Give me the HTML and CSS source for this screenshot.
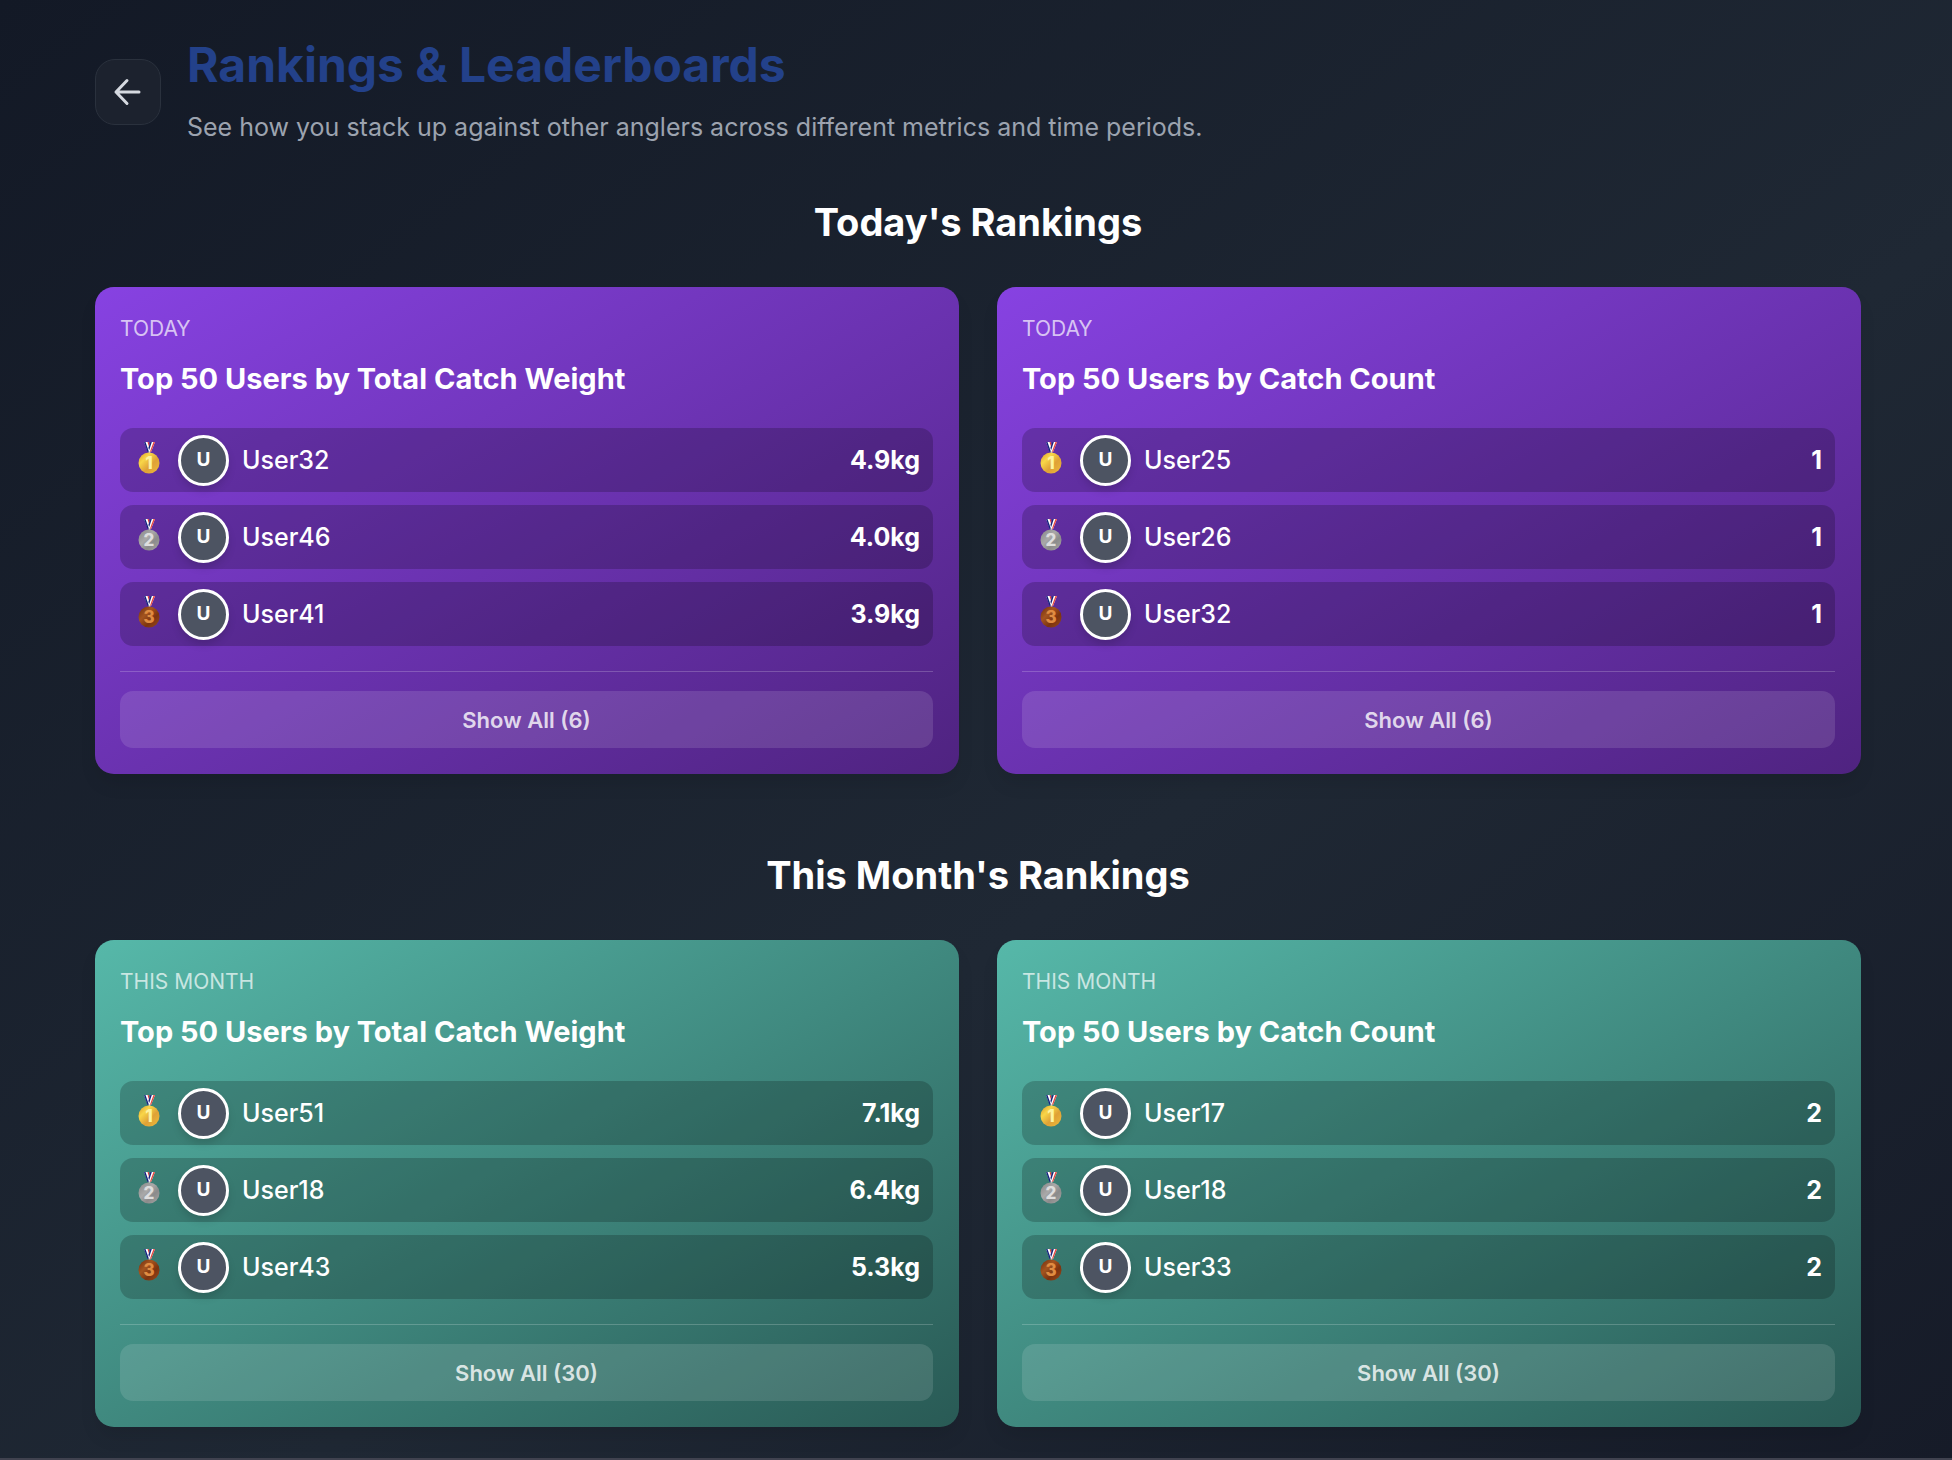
FILE: index.html
```html
<!DOCTYPE html>
<html lang="en">
<head>
<meta charset="utf-8">
<meta name="viewport" content="width=device-width, initial-scale=1">
<title>Rankings &amp; Leaderboards</title>
<link rel="stylesheet" href="styles.css">
</head>
<body>
<svg class="defs" aria-hidden="true">
  <defs>
    <linearGradient id="gold" x1="0" y1="0" x2="1" y2="1"><stop offset="0" stop-color="#d9962a"/><stop offset=".3" stop-color="#f8d648"/><stop offset=".6" stop-color="#dfa136"/><stop offset="1" stop-color="#eebb3a"/></linearGradient>
    <linearGradient id="silver" x1="0" y1="0" x2="1" y2="1"><stop offset="0" stop-color="#858585"/><stop offset=".4" stop-color="#a9a9a9"/><stop offset=".65" stop-color="#8b8b8b"/><stop offset="1" stop-color="#a6a6a6"/></linearGradient>
    <linearGradient id="bronze" x1="0" y1="0" x2="1" y2="1"><stop offset="0" stop-color="#6f2c0c"/><stop offset=".35" stop-color="#a4541f"/><stop offset=".65" stop-color="#7c330f"/><stop offset="1" stop-color="#9a4a1b"/></linearGradient>
    <g id="ribbon">
      <path d="M11 0h4.500l2 6-.5 4h-2z" fill="#fff"/>
      <path d="M11 0h1.500l3.500 10h-1.500z" fill="#15237f"/>
      <path d="M14.500 0h1.200l1.600 5-.6 2z" fill="#e23b3b"/>
      <path d="M17.500 0h4.500l-4 10h-2z" fill="#fff"/>
      <path d="M17.300 0h1.500l-2.600 8-.8-2z" fill="#15237f"/>
      <path d="M20.500 0h1.500l-4 10h-1.200z" fill="#e8453f"/>
      <circle cx="16.500" cy="10" r="1" fill="#d8d8d8"/>
    </g>
    <g id="medal-1"><use href="#ribbon"/><circle cx="16" cy="21" r="10.5" fill="url(#gold)"/></g>
    <g id="medal-2"><use href="#ribbon"/><circle cx="16" cy="21" r="10.5" fill="url(#silver)"/></g>
    <g id="medal-3"><use href="#ribbon"/><circle cx="16" cy="21" r="10.5" fill="url(#bronze)"/></g>
  </defs>
</svg>
<main class="page">
  <header class="page-header">
    <button class="back" type="button" aria-label="Back">
      <svg viewBox="0 0 32 32" width="32" height="32" fill="none" stroke="currentColor" stroke-width="3" stroke-linecap="round" stroke-linejoin="round"><path d="M27 16H4M15 27.500L4 16L15 4.500"/></svg>
    </button>
    <div class="intro">
      <h1>Rankings &amp; Leaderboards</h1>
      <p>See how you stack up against other anglers across different metrics and time periods.</p>
    </div>
  </header>
  <section class="period today">
    <h2>Today's Rankings</h2>
    <div class="cards">
      <article class="card">
        <p class="label">TODAY</p>
        <h3>Top 50 Users by Total Catch Weight</h3>
        <ol class="rows">
          <li><svg class="medal" viewBox="0 2 32 32"><use href="#medal-1"/><text class="num gold" x="16" y="27">1</text></svg><span class="avatar">U</span><span class="name">User32</span><span class="value">4.9kg</span></li>
          <li><svg class="medal" viewBox="0 2 32 32"><use href="#medal-2"/><text class="num silver" x="16" y="27">2</text></svg><span class="avatar">U</span><span class="name">User46</span><span class="value">4.0kg</span></li>
          <li><svg class="medal" viewBox="0 2 32 32"><use href="#medal-3"/><text class="num bronze" x="16" y="27">3</text></svg><span class="avatar">U</span><span class="name">User41</span><span class="value">3.9kg</span></li>
        </ol>
        <div class="more"><button type="button">Show All (6)</button></div>
      </article>
      <article class="card">
        <p class="label">TODAY</p>
        <h3>Top 50 Users by Catch Count</h3>
        <ol class="rows">
          <li><svg class="medal" viewBox="0 2 32 32"><use href="#medal-1"/><text class="num gold" x="16" y="27">1</text></svg><span class="avatar">U</span><span class="name">User25</span><span class="value">1</span></li>
          <li><svg class="medal" viewBox="0 2 32 32"><use href="#medal-2"/><text class="num silver" x="16" y="27">2</text></svg><span class="avatar">U</span><span class="name">User26</span><span class="value">1</span></li>
          <li><svg class="medal" viewBox="0 2 32 32"><use href="#medal-3"/><text class="num bronze" x="16" y="27">3</text></svg><span class="avatar">U</span><span class="name">User32</span><span class="value">1</span></li>
        </ol>
        <div class="more"><button type="button">Show All (6)</button></div>
      </article>
    </div>
  </section>
  <section class="period month">
    <h2>This Month's Rankings</h2>
    <div class="cards">
      <article class="card">
        <p class="label">THIS MONTH</p>
        <h3>Top 50 Users by Total Catch Weight</h3>
        <ol class="rows">
          <li><svg class="medal" viewBox="0 2 32 32"><use href="#medal-1"/><text class="num gold" x="16" y="27">1</text></svg><span class="avatar">U</span><span class="name">User51</span><span class="value">7.1kg</span></li>
          <li><svg class="medal" viewBox="0 2 32 32"><use href="#medal-2"/><text class="num silver" x="16" y="27">2</text></svg><span class="avatar">U</span><span class="name">User18</span><span class="value">6.4kg</span></li>
          <li><svg class="medal" viewBox="0 2 32 32"><use href="#medal-3"/><text class="num bronze" x="16" y="27">3</text></svg><span class="avatar">U</span><span class="name">User43</span><span class="value">5.3kg</span></li>
        </ol>
        <div class="more"><button type="button">Show All (30)</button></div>
      </article>
      <article class="card">
        <p class="label">THIS MONTH</p>
        <h3>Top 50 Users by Catch Count</h3>
        <ol class="rows">
          <li><svg class="medal" viewBox="0 2 32 32"><use href="#medal-1"/><text class="num gold" x="16" y="27">1</text></svg><span class="avatar">U</span><span class="name">User17</span><span class="value">2</span></li>
          <li><svg class="medal" viewBox="0 2 32 32"><use href="#medal-2"/><text class="num silver" x="16" y="27">2</text></svg><span class="avatar">U</span><span class="name">User18</span><span class="value">2</span></li>
          <li><svg class="medal" viewBox="0 2 32 32"><use href="#medal-3"/><text class="num bronze" x="16" y="27">3</text></svg><span class="avatar">U</span><span class="name">User33</span><span class="value">2</span></li>
        </ol>
        <div class="more"><button type="button">Show All (30)</button></div>
      </article>
    </div>
  </section>
</main>
</body>
</html>
```
FILE: styles.css
```css
* { box-sizing: border-box; }
h1, h2, h3, p, ol { margin: 0; padding: 0; }
body {
  margin: 0;
  min-height: 100vh;
  font-family: Inter, "Liberation Sans", sans-serif;
  color: #fff;
  background: linear-gradient(to bottom right, #131926, #1f2834 58%, #161b28);
  border-bottom: 2px solid #40424f;
}
button { font: inherit; color: inherit; border: 0; cursor: pointer; }
.defs { display: block; width: 0; height: 0; }
.page { padding: 38px 91px 30px 95px; }

.page-header { display: flex; align-items: center; gap: 26px; margin-bottom: 51px; }
.back {
  display: grid;
  place-items: center;
  flex: none;
  width: 66px;
  height: 66px;
  padding: 0;
  border: 1px solid #2a313d;
  border-radius: 20px;
  background: #1c222e;
  color: #d5d9e0;
}
h1 { font-size: 48px; line-height: 54px; font-weight: 700; color: #23418a; margin-bottom: 17px; }
.intro p { font-size: 25px; line-height: 36px; color: #9ca3af; }

.period + .period { margin-top: 75px; }
h2 { font-size: 38px; line-height: 52px; font-weight: 700; text-align: center; margin-bottom: 39px; }
.cards { display: grid; grid-template-columns: 1fr 1fr; gap: 38px; }
.card {
  padding: 26px 26px 26px 25px;
  border-radius: 19px;
  box-shadow: 0 12px 20px -4px rgba(0, 0, 0, .1);
}
.today .card { background: linear-gradient(to bottom right, #8742e2, #4f2380); }
.month .card { background: linear-gradient(to bottom right, #56b8a9, #295a55); }
.label { font-size: 21px; line-height: 32px; color: rgba(255, 255, 255, .7); margin-bottom: 11px; }
h3 { font-size: 29px; line-height: 46px; font-weight: 700; margin-bottom: 26px; }

.rows { display: grid; gap: 13px; list-style: none; margin-bottom: 25px; }
.rows li {
  display: flex;
  align-items: center;
  gap: 13px;
  height: 64px;
  padding: 0 13px;
  border-radius: 13px;
  background: rgba(0, 0, 0, .2);
}
.medal { flex: none; width: 32px; height: 32px; overflow: visible; }
.num { font-size: 17px; font-weight: 800; text-anchor: middle; }
.gold { fill: #fdf3a0; }
.silver { fill: #dedede; }
.bronze { fill: #e08c42; }
.avatar {
  display: grid;
  place-items: center;
  flex: none;
  width: 51px;
  height: 51px;
  border: 3px solid #fff;
  border-radius: 50%;
  background: #4d5462;
  box-shadow: 0 5px 8px -1px rgba(0, 0, 0, .15);
  font-size: 19px;
  line-height: 24px;
  font-weight: 700;
}
.name { flex: 1; font-size: 25px; line-height: 38px; font-weight: 500; }
.value { font-size: 25px; line-height: 38px; font-weight: 700; }

.more { padding-top: 19px; border-top: 1px solid rgba(255, 255, 255, .2); }
.more button {
  display: block;
  width: 100%;
  height: 57px;
  border-radius: 13px;
  background: rgba(255, 255, 255, .12);
  color: rgba(255, 255, 255, .8);
  font-size: 22px;
  font-weight: 600;
}
```
